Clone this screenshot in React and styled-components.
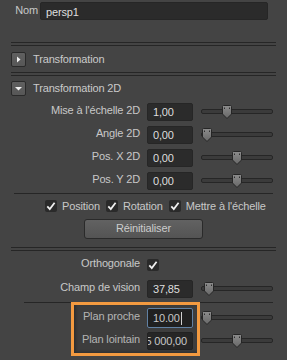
import React from 'react';
import styled, { createGlobalStyle } from 'styled-components';

const GlobalStyle = createGlobalStyle`
  html, body {
    margin: 0;
    padding: 0;
    background: #444444;
  }
  body {
    font-family: "Liberation Sans", Arial, sans-serif;
    font-size: 11px;
    letter-spacing: -0.15px;
    color: #c8c8c8;
  }
`;

const Panel = styled.div`
  position: relative;
  width: 287px;
  height: 360px;
  overflow: hidden;
  background: #444444;
  padding-top: 2px;
  box-sizing: border-box;
  display: flex;
  flex-direction: column;
`;

const NameRow = styled.div`
  display: flex;
  align-items: center;
  height: 18px;
`;

const NameLabel = styled.div`
  width: 38px;
  text-align: right;
  margin-bottom: 2px;
`;

const Field = styled.div`
  display: flex;
  align-items: center;
  justify-content: ${(p) => (p.$end ? 'flex-end' : 'flex-start')};
  box-sizing: border-box;
  width: ${(p) => p.$width || 46}px;
  height: ${(p) => (p.$focus ? 20 : 18)}px;
  margin-left: ${(p) => p.$gap ?? 7}px;
  padding: 0 ${(p) => (p.$end ? 5 : 0)}px 0 ${(p) => (p.$end ? 0 : 5)}px;
  background: ${(p) => (p.$focus ? '#242424' : '#2b2b2b')};
  border: 1px solid ${(p) => (p.$focus ? '#6d90b6' : '#262626')};
  border-radius: 2px;
  color: #dedede;
  white-space: nowrap;
  overflow: hidden;
  padding-top: 1px;
`;

const Caret = styled.span`
  display: inline-block;
  width: 1px;
  height: 13px;
  margin-left: 1px;
  background: #e8e8e8;
`;

const Separator = styled.div`
  flex: none;
  box-sizing: border-box;
  height: ${(p) => (p.$double ? 4 : 1)}px;
  margin: ${(p) => p.$top || 0}px ${(p) => p.$right ?? 11}px 0 ${(p) => p.$left ?? 11}px;
  border-top: 1px solid #262626;
  border-bottom: ${(p) => (p.$double ? '1px solid #262626' : 'none')};
`;

const Header = styled.div`
  display: flex;
  align-items: center;
  gap: 7px;
  height: ${(p) => p.$height}px;
  padding-left: 11px;
  color: #cacaca;
  font-size: 11px;
`;

const Toggle = styled.div`
  width: 15px;
  height: 15px;
  box-sizing: border-box;
  border: 1px solid #2a2a2a;
  border-radius: 2px;
  background: linear-gradient(#606060, #575757);
  svg {
    display: block;
  }
`;

const Row = styled.div`
  display: flex;
  align-items: center;
  height: ${(p) => p.$height || 23}px;
`;

const Label = styled.div`
  width: 140px;
  text-align: right;
  margin-bottom: 3px;
  white-space: nowrap;
`;

const Track = styled.div`
  position: relative;
  width: 72px;
  height: 14px;
  margin-left: 8px;
  display: flex;
  align-items: center;
`;

const Groove = styled.div`
  width: 100%;
  height: 5px;
  box-sizing: border-box;
  border: 1px solid #262626;
  border-radius: 2px;
  background: #3b3b3b;
`;

const Thumb = styled.svg`
  position: absolute;
  top: 0;
  left: ${(p) => p.$at}px;
`;

const CheckRow = styled.div`
  display: flex;
  align-items: center;
  height: 24px;
  padding-left: 45px;
`;

const CheckItem = styled.div`
  display: flex;
  align-items: center;
  gap: 5px;
  margin-right: 6px;
  white-space: nowrap;
`;

const Box = styled.div`
  width: 12px;
  height: 12px;
  margin-left: ${(p) => p.$gap || 0}px;
  margin-top: ${(p) => p.$drop || 0}px;
  border-radius: 2px;
  background: #2a2a2a;
  svg {
    display: block;
  }
`;

const ButtonBar = styled.div`
  display: flex;
  justify-content: center;
  margin-top: 1px;
`;

const Button = styled.div`
  width: 119px;
  height: 20px;
  box-sizing: border-box;
  display: flex;
  align-items: center;
  justify-content: center;
  padding-bottom: 2px;
  border: 1px solid #2a2a2a;
  border-radius: 3px;
  background: linear-gradient(#626262, #545454);
  color: #cccccc;
`;

const Highlight = styled.div`
  position: absolute;
  left: 71px;
  top: 302px;
  width: 129px;
  height: 54px;
  box-sizing: border-box;
  border: 3px solid #f39a40;
  background: rgba(0, 0, 0, 0.1);
  box-shadow: inset 2px -1px 3px rgba(0, 0, 0, 0.25);
  pointer-events: none;
`;

function Slider({ at }) {
  return (
    <Track>
      <Groove />
      <Thumb $at={at - 201} width="10" height="14" viewBox="0 0 10 14">
        <defs>
          <linearGradient id="tg" x1="0" y1="0" x2="0" y2="1">
            <stop offset="0" stopColor="#8c8c8c" />
            <stop offset="1" stopColor="#676767" />
          </linearGradient>
        </defs>
        <path
          d="M0.5 1.5 Q0.5 0.5 1.5 0.5 H8.5 Q9.5 0.5 9.5 1.5 V9 L5 13.5 L0.5 9 Z"
          fill="url(#tg)"
          stroke="#262626"
        />
        <rect x="2" y="2.5" width="1" height="1.5" fill="#2e2e2e" />
        <rect x="7" y="2.5" width="1" height="1.5" fill="#2e2e2e" />
      </Thumb>
    </Track>
  );
}

function Check() {
  return (
    <svg width="12" height="12" viewBox="0 0 12 12">
      <polyline points="2.3,6.3 4.8,9 9.6,2.8" fill="none" stroke="#f0f0f0" strokeWidth="1.8" />
    </svg>
  );
}

function ValueRow({ label, value, at }) {
  return (
    <Row>
      <Label>{label}</Label>
      <Field>{value}</Field>
      <Slider at={at} />
    </Row>
  );
}

export default function App() {
  return (
    <>
      <GlobalStyle />
      <Panel>
        <NameRow>
          <NameLabel>Nom</NameLabel>
          <Field $width={228} $gap={2}>persp1</Field>
        </NameRow>

        <Separator $double $top={22} />
        <Header $height={26}>
          <Toggle>
            <svg width="13" height="13" viewBox="0 0 13 13">
              <polygon points="5,3.5 8.5,6.5 5,9.5" fill="#f2f2f2" />
            </svg>
          </Toggle>
          Transformation
        </Header>

        <Separator $double />
        <Header $height={24}>
          <Toggle>
            <svg width="13" height="13" viewBox="0 0 13 13">
              <polygon points="3,5 10,5 6.5,8.5" fill="#f2f2f2" />
            </svg>
          </Toggle>
          Transformation 2D
        </Header>

        <ValueRow label="Mise à l'échelle 2D" value="1,00" at={222} />
        <ValueRow label="Angle 2D" value="0,00" at={202} />
        <ValueRow label="Pos. X 2D" value="0,00" at={232} />
        <ValueRow label="Pos. Y 2D" value="0,00" at={232} />

        <Separator $top={1} $left={14} $right={14} />
        <CheckRow>
          <CheckItem>
            <Box><Check /></Box>Position
          </CheckItem>
          <CheckItem>
            <Box><Check /></Box>Rotation
          </CheckItem>
          <CheckItem>
            <Box><Check /></Box>Mettre à l'échelle
          </CheckItem>
        </CheckRow>
        <ButtonBar>
          <Button>Réinitialiser</Button>
        </ButtonBar>

        <Separator $double $top={8} />
        <Row $height={26}>
          <Label>Orthogonale</Label>
          <Box $gap={7} $drop={2}><Check /></Box>
        </Row>
        <ValueRow label="Champ de vision" value="37,85" at={204} />

        <Separator $top={2} $left={24} $right={14} />
        <Row style={{ marginTop: 3 }}>
          <Label>Plan proche</Label>
          <Field $focus>10.00<Caret /></Field>
          <Slider at={202} />
        </Row>
        <Row>
          <Label>Plan lointain</Label>
          <Field $end>5 000,00</Field>
          <Slider at={232} />
        </Row>

        <Highlight />
      </Panel>
    </>
  );
}
